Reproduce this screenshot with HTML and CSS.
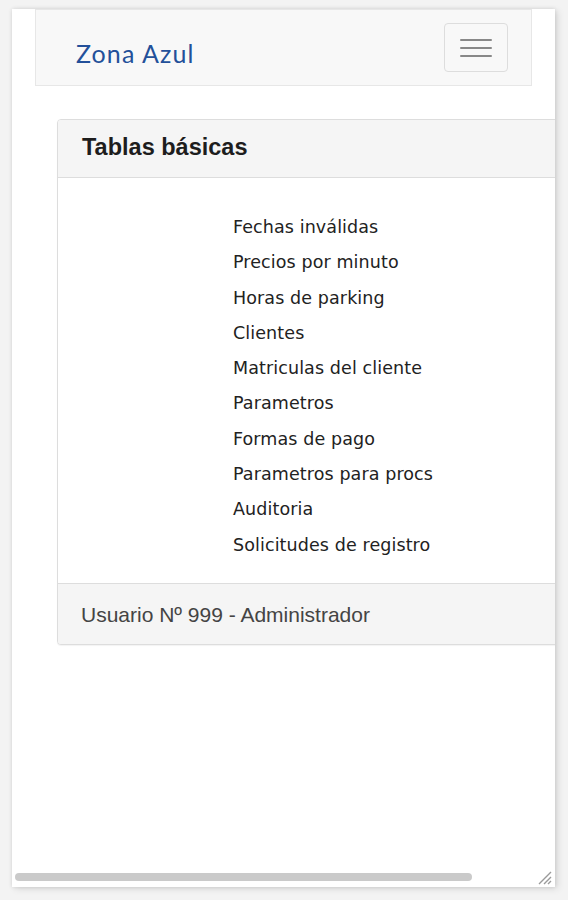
FILE: index.html
```html
<!DOCTYPE html>
<html lang="es">
<head>
<meta charset="utf-8">
<title>Zona Azul</title>
<link rel="stylesheet" href="styles.css">
</head>
<body>
<div class="frame">
  <div class="viewport">
    <nav class="navbar">
      <a class="brand" href="#">Zona Azul</a>
      <button class="toggle" type="button" aria-label="Menú">
        <span class="bar"></span><span class="bar"></span><span class="bar"></span>
      </button>
    </nav>
    <section class="panel">
      <header class="panel-heading">Tablas básicas</header>
      <div class="panel-body">
        <ul class="menu">
          <li>Fechas inválidas</li>
          <li>Precios por minuto</li>
          <li>Horas de parking</li>
          <li>Clientes</li>
          <li>Matriculas del cliente</li>
          <li>Parametros</li>
          <li>Formas de pago</li>
          <li>Parametros para procs</li>
          <li>Auditoria</li>
          <li>Solicitudes de registro</li>
        </ul>
      </div>
      <footer class="panel-footer">Usuario Nº 999 - Administrador</footer>
    </section>
  </div>
  <div class="hscroll">
    <div class="thumb"></div>
    <svg class="grip" width="18" height="18" viewBox="0 0 18 18" aria-hidden="true">
      <path d="M17 5 L5 17 M17 10 L10 17 M17 14 L14 17" stroke="#9a9a9a" stroke-width="1.4" fill="none"/>
    </svg>
  </div>
</div>
</body>
</html>
```
FILE: styles.css
```css
html, body {
  margin: 0;
  padding: 0;
  background: #f3f3f3;
}
body {
  padding: 9px 13px 13px 12px;
  font-family: "Liberation Sans", Arial, sans-serif;
  color: #333;
}
.frame {
  width: 543px;
  height: 878px;
  background: #fff;
  box-shadow: 0 0 4px rgba(0,0,0,0.12), 3px 2px 7px rgba(0,0,0,0.1);
  display: flex;
  flex-direction: column;
  overflow: hidden;
}
.viewport {
  flex: 1;
  overflow: hidden;
  padding: 0 0 0 23px;
}
.navbar {
  box-sizing: border-box;
  width: 497px;
  height: 77px;
  background: #f8f8f8;
  border: 1px solid #e7e7e7;
  display: flex;
  align-items: center;
  justify-content: space-between;
  padding: 0 23px 0 40px;
}
.brand {
  font-family: "Lato", "Noto Sans", sans-serif;
  font-size: 25px;
  color: #23509a;
  text-decoration: none;
  letter-spacing: 1.1px;
  padding-top: 10px;
}
.toggle {
  width: 64px;
  height: 49px;
  border: 1px solid #dddddd;
  border-radius: 4px;
  background: #f8f8f8;
  display: flex;
  flex-direction: column;
  justify-content: center;
  align-items: center;
  gap: 6px;
  padding: 0;
}
.bar {
  display: block;
  width: 32px;
  height: 2px;
  background: #888;
  border-radius: 1px;
}
.panel {
  margin: 33px 0 0 22px;
  width: 520px;
  border: 1px solid #dddddd;
  border-radius: 4px;
  background: #fff;
  box-shadow: 0 1px 1px rgba(0,0,0,0.05);
}
.panel-heading {
  height: 58px;
  box-sizing: border-box;
  background: #f5f5f5;
  border-bottom: 1px solid #dddddd;
  border-radius: 3px 3px 0 0;
  padding: 14px 24px 0;
  font-size: 23.5px;
  font-weight: bold;
  color: #1d1d1d;
}
.panel-body {
  height: 405px;
  box-sizing: border-box;
  padding: 38px 0 0 175px;
}
.menu {
  list-style: none;
  margin: 0;
  padding: 0;
  font-family: "DejaVu Sans", sans-serif;
  font-size: 17.5px;
  letter-spacing: 0.1px;
  color: #222;
}
.menu li {
  height: 35.3px;
  line-height: 22px;
}
.panel-footer {
  height: 61px;
  box-sizing: border-box;
  background: #f5f5f5;
  border-top: 1px solid #dddddd;
  border-radius: 0 0 3px 3px;
  padding: 19px 23px 0;
  font-size: 21px;
  color: #444;
}
.hscroll {
  height: 22px;
  display: flex;
  align-items: flex-start;
  justify-content: space-between;
  padding: 5px 3px 0 3px;
  box-sizing: border-box;
}
.thumb {
  width: 457px;
  height: 8px;
  margin-top: 3px;
  background: #cacaca;
  border-radius: 4px;
}
.grip {
  margin-top: -3px;
}
```
